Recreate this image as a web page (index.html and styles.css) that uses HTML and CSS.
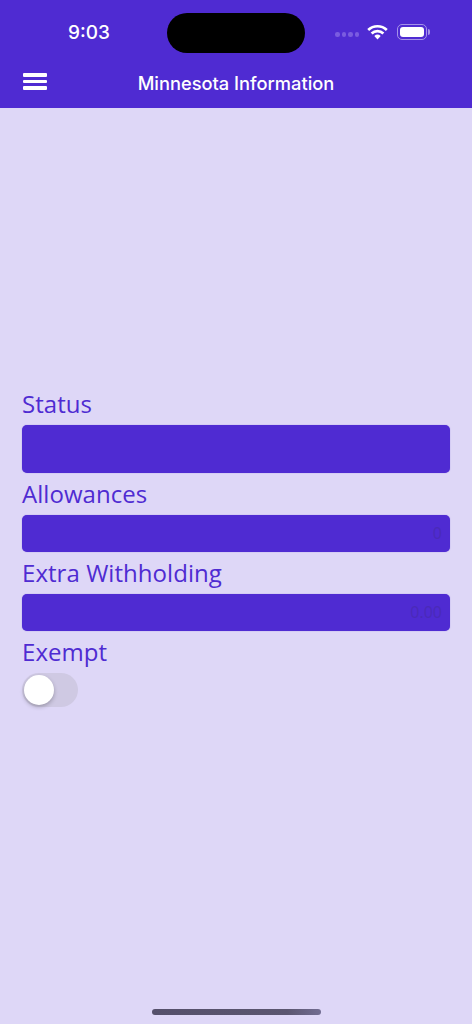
FILE: index.html
```html
<!DOCTYPE html>
<html lang="en">
<head>
    <meta charset="UTF-8">
    <meta name="viewport" content="width=device-width, initial-scale=1.0">
    <title>Minnesota Information</title>
    <link rel="stylesheet" href="styles.css">
</head>
<body>
    <div class="screen">
        <header class="header">
            <div class="status-bar">
                <span class="time">9:03</span>
                <div class="island"></div>
                <div class="status-icons">
                    <div class="signal"><i></i><i></i><i></i><i></i></div>
                    <svg class="wifi" width="21" height="16" viewBox="0 0 21 16">
                        <path d="M10.5 15.5 7.3 12.1a4.7 4.7 0 0 1 6.4 0Z" fill="#fff"/>
                        <path d="M1.2 6a13.4 13.4 0 0 1 18.6 0" fill="none" stroke="#fff" stroke-width="2.7"/>
                        <path d="M4.6 9.5a8.5 8.5 0 0 1 11.8 0" fill="none" stroke="#fff" stroke-width="2.7"/>
                    </svg>
                    <div class="battery"><div class="battery-fill"></div></div>
                    <div class="battery-cap"></div>
                </div>
            </div>
            <div class="nav-bar">
                <div class="menu-icon"><i></i><i></i><i></i></div>
                <h1>Minnesota Information</h1>
            </div>
        </header>

        <main class="form">
            <label>Status</label>
            <div class="field field-tall"></div>
            <label>Allowances</label>
            <div class="field">0</div>
            <label>Extra Withholding</label>
            <div class="field">0.00</div>
            <label>Exempt</label>
            <div class="toggle"><div class="knob"></div></div>
        </main>

        <div class="home-indicator"></div>
    </div>
</body>
</html>
```

FILE: styles.css
```css
* {
    box-sizing: border-box;
}
html, body {
    margin: 0;
    padding: 0;
}
body {
    width: 472px;
    height: 1024px;
    overflow: hidden;
    background-color: #ded7f7;
    font-family: 'Open Sans', 'Noto Sans', sans-serif;
}
.screen {
    height: 1024px;
    display: flex;
    flex-direction: column;
    position: relative;
}
.header {
    height: 108px;
    background-color: #4f2bd2;
    color: #fff;
    flex-shrink: 0;
}
.status-bar {
    height: 60px;
    position: relative;
    padding-top: 13px;
}
.time {
    position: absolute;
    left: 68px;
    top: 20px;
    font-family: Inter, 'Liberation Sans', sans-serif;
    font-size: 19px;
    font-weight: 500;
    line-height: 25px;
}
.island {
    width: 138px;
    height: 40px;
    margin: 0 auto;
    background-color: #000;
    border-radius: 20px;
}
.status-icons {
    position: absolute;
    left: 335px;
    top: 24px;
    display: flex;
    align-items: center;
}
.signal {
    display: flex;
    gap: 2px;
    margin-top: 5px;
}
.signal i {
    width: 4.5px;
    height: 4.5px;
    border-radius: 50%;
    background-color: #7a5ce0;
}
.wifi {
    margin-left: 8px;
    margin-top: -1px;
}
.battery {
    width: 30px;
    height: 16px;
    margin-left: 9px;
    padding: 2px;
    border: 1px solid #a592e8;
    border-radius: 5px;
}
.battery-fill {
    height: 100%;
    background-color: #fff;
    border-radius: 3px;
}
.battery-cap {
    width: 2px;
    height: 6px;
    margin-left: 1px;
    background-color: #a592e8;
    border-radius: 0 2px 2px 0;
}
.nav-bar {
    height: 48px;
    position: relative;
    display: flex;
    align-items: center;
    justify-content: center;
}
.nav-bar h1 {
    margin: 0;
    font-family: Inter, 'Liberation Sans', sans-serif;
    font-size: 18.3px;
    font-weight: 500;
    line-height: 24px;
    margin-top: -3px;
}
.menu-icon {
    position: absolute;
    left: 23px;
    top: 13px;
    width: 24px;
    display: flex;
    flex-direction: column;
    gap: 3px;
}
.menu-icon i {
    height: 3.6px;
    background-color: #fff;
    border-radius: 1px;
}
.form {
    padding: 281px 22px 0;
    display: flex;
    flex-direction: column;
}
.form label {
    height: 30px;
    color: #4f2bd2;
    font-size: 24px;
    letter-spacing: 0.05px;
    line-height: 30px;
    margin-bottom: 5.5px;
}
.field {
    height: 37px;
    margin-bottom: 6.5px;
    padding-right: 8px;
    background-color: #4f2bd2;
    border-radius: 5px;
    box-shadow: 0 0 1px rgba(79,43,210,0.6);
    color: #4a2ab8;
    font-size: 16px;
    line-height: 37px;
    text-align: right;
}
.field-tall {
    height: 48px;
}
.toggle {
    width: 56px;
    height: 34px;
    padding: 2px;
    background-color: #cfc9e3;
    border-radius: 17px;
}
.knob {
    width: 30px;
    height: 30px;
    background-color: #fff;
    border-radius: 50%;
    box-shadow: 0 2px 4px rgba(0,0,0,0.25);
}
.home-indicator {
    position: absolute;
    left: 152px;
    bottom: 9px;
    width: 169px;
    height: 6px;
    background: linear-gradient(to right, #55506b 0%, #5b5670 80%, #726d92 100%);
    border-radius: 3px;
}
```
